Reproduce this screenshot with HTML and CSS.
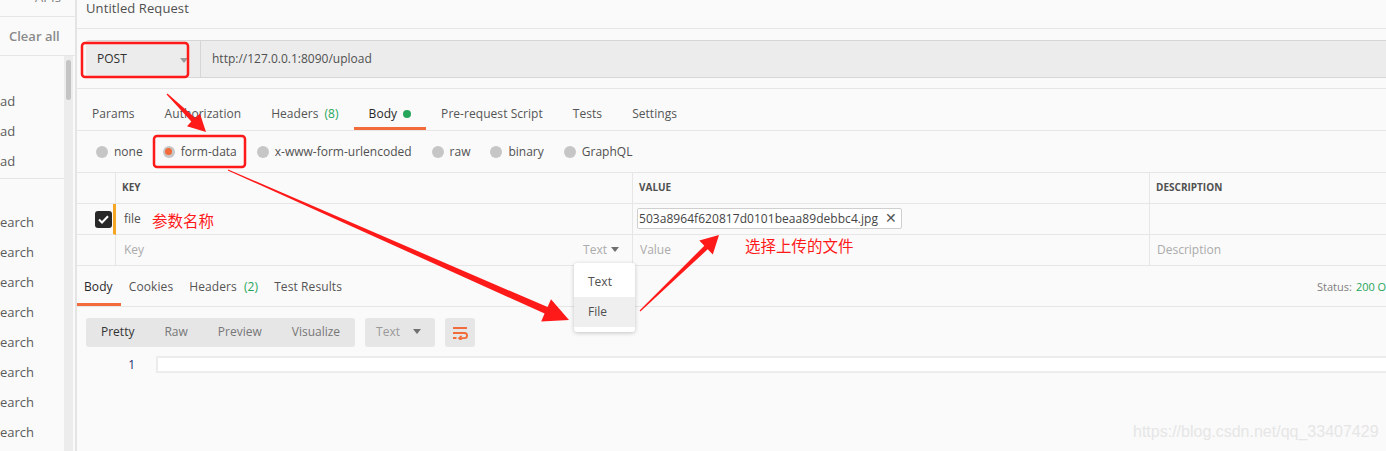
FILE: index.html
```html
<!DOCTYPE html>
<html>
<head>
<meta charset="utf-8">
<link rel="stylesheet" href="styles.css">
</head>
<body>
<div class="app">
  <aside class="sidebar">
    <div class="sb-apis"><span>APIs</span></div>
    <div class="sb-clear">Clear all</div>
    <div class="sb-body">
      <div class="sb-list">
        <div class="sb-group">
          <div class="sb-item">ad</div>
          <div class="sb-item">ad</div>
          <div class="sb-item">ad</div>
        </div>
        <div class="sb-group sb-group2">
          <div class="sb-item">earch</div>
          <div class="sb-item">earch</div>
          <div class="sb-item">earch</div>
          <div class="sb-item">earch</div>
          <div class="sb-item">earch</div>
          <div class="sb-item">earch</div>
          <div class="sb-item">earch</div>
          <div class="sb-item">earch</div>
        </div>
      </div>
      <div class="sb-track"><div class="sb-thumb"></div></div>
    </div>
  </aside>

  <main class="main">
    <div class="title">Untitled Request</div>
    <div class="urlrow">
      <div class="method">POST<span class="caret"></span></div>
      <div class="url">http://127.0.0.1:8090/upload</div>
    </div>
    <nav class="tabs">
      <div class="tab">Params</div>
      <div class="tab">Authorization</div>
      <div class="tab">Headers <span class="green">(8)</span></div>
      <div class="tab active">Body <span class="dot"></span></div>
      <div class="tab">Pre-request Script</div>
      <div class="tab">Tests</div>
      <div class="tab">Settings</div>
    </nav>
    <div class="radios">
      <label class="radio"><span class="circle"></span>none</label>
      <label class="radio"><span class="circle on"></span>form-data</label>
      <label class="radio"><span class="circle"></span>x-www-form-urlencoded</label>
      <label class="radio"><span class="circle"></span>raw</label>
      <label class="radio"><span class="circle"></span>binary</label>
      <label class="radio"><span class="circle"></span>GraphQL</label>
    </div>
    <div class="table">
      <div class="cell c0 head"></div>
      <div class="cell head">KEY</div>
      <div class="cell head">VALUE</div>
      <div class="cell head">DESCRIPTION</div>

      <div class="cell c0 marked"><span class="check"><svg width="11" height="9" viewBox="0 0 11 9"><path d="M1 4.5 L4 7.5 L10 1.2" fill="none" stroke="#fff" stroke-width="2"/></svg></span></div>
      <div class="cell key">file</div>
      <div class="cell"><span class="chip">503a8964f620817d0101beaa89debbc4.jpg<span class="x">✕</span></span></div>
      <div class="cell"></div>

      <div class="cell c0"></div>
      <div class="cell key ph"><span>Key</span><span class="type">Text <span class="caret dark"></span></span></div>
      <div class="cell ph">Value</div>
      <div class="cell ph">Description</div>
    </div>
    <div class="rtabs">
      <div class="rtab active">Body</div>
      <div class="rtab">Cookies</div>
      <div class="rtab">Headers <span class="green">(2)</span></div>
      <div class="rtab">Test Results</div>
      <div class="status">Status: <span class="green">200 OK</span>&nbsp;&nbsp; Time: 15ms</div>
    </div>
    <div class="toolbar">
      <div class="seg">
        <span class="seg-b on">Pretty</span>
        <span class="seg-b">Raw</span>
        <span class="seg-b">Preview</span>
        <span class="seg-b">Visualize</span>
      </div>
      <div class="fmt">Text<span class="caret dark"></span></div>
      <div class="wrap"><svg width="16" height="14" viewBox="0 0 16 14"><path d="M1 2 H15 M1 7 H12.5 a2.6 2.6 0 0 1 0 5.2 H7.5 M1 12 H4.5" fill="none" stroke="#f26b3a" stroke-width="1.8"/><path d="M9.6 9.8 L7 12.2 L9.6 14.4" fill="none" stroke="#f26b3a" stroke-width="1.6"/></svg></div>
    </div>
    <div class="editor">
      <span class="ln">1</span>
      <div class="line"></div>
    </div>
  </main>
</div>

<div class="menu">
  <div class="menu-item">Text</div>
  <div class="menu-item hover">File</div>
</div>

<div class="note note1">参数名称</div>
<div class="note note2">选择上传的文件</div>
<div class="watermark">https://blog.csdn.net/qq_33407429</div>

<svg class="anno" width="1386" height="451" viewBox="0 0 1386 451">
  <rect x="82" y="43" width="106" height="34" rx="3" fill="none" stroke="#ff1a1a" stroke-width="2.5"/>
  <rect x="154" y="136" width="91" height="31" rx="3" fill="none" stroke="#ff1a1a" stroke-width="2.5"/>
  <polygon fill="#ff1a1a" points="166.6,94.4 191.3,121.6 187,126.3 206,132 199.9,113.6 195.3,118 167.4,93.6"/>
  <polygon fill="#ff1a1a" points="227.8,170.5 544.6,313.5 541.2,321.4 569,320 551,299.2 547.6,307.1 228.2,169.5"/>
  <polygon fill="#ff1a1a" points="640.4,311.4 707.7,249.3 712.8,254.5 719,235 699.3,240.5 704.3,245.7 639.6,310.6"/>
</svg>
</body>
</html>
```
FILE: styles.css
```css
* { box-sizing: border-box; }
html, body { margin: 0; padding: 0; }
body {
  width: 1386px;
  height: 451px;
  overflow: hidden;
  background: #fafafa;
  font-family: "Open Sans", "Noto Sans", sans-serif;
  font-size: 12px;
  color: #505050;
  position: relative;
}
.app { display: flex; height: 451px; }

/* sidebar */
.sidebar {
  width: 77px;
  flex: none;
  border-right: 2px solid #e4e4e4;
  background: #fafafa;
  display: flex;
  flex-direction: column;
}
.sb-apis {
  height: 17px;
  overflow: hidden;
  border-bottom: 1px solid #e6e6e6;
  padding-left: 35px;
  font-size: 13px;
  color: #808080;
}
.sb-apis span { display: block; margin-top: -12px; }
.sb-clear {
  height: 39px;
  border-bottom: 1px solid #e6e6e6;
  padding-left: 9px;
  display: flex;
  align-items: center;
  font-size: 13px;
  font-weight: 600;
  color: #8a8a8a;
}
.sb-body { flex: 1; display: flex; }
.sb-list { flex: 1; }
.sb-group { padding-top: 30px; border-bottom: 1px solid #e4e4e4; padding-bottom: 2px; }
.sb-group2 { border-bottom: 0; padding-top: 28px; }
.sb-item { height: 30px; line-height: 30px; font-size: 13px; color: #5a5a5a; }
.sb-track { width: 9px; background: #ececec; margin-right: 2px; padding: 4px 2px 0; }
.sb-thumb { height: 40px; background: #c4c4c4; border-radius: 3px; }

/* main */
.main { flex: 1; min-width: 0; overflow: hidden; display: flex; flex-direction: column; }
.title {
  height: 29px;
  padding-left: 9px;
  padding-top: 0;
  line-height: 17px;
  font-size: 13px;
  color: #505050;
  border-bottom: 1px solid #e6e6e6;
  letter-spacing: 0.1px;
}
.urlrow {
  height: 60px;
  padding: 11px 0 10px 9px;
  display: flex;
  border-bottom: 1px solid #e6e6e6;
}
.method {
  width: 115px;
  background: #ececec;
  border-top: 1px solid #d6d6d6;
  border-bottom: 1px solid #d6d6d6;
  border-right: 1px solid #d6d6d6;
  border-radius: 3px 0 0 3px;
  display: flex;
  align-items: center;
  padding-left: 11px;
  padding-bottom: 2px;
  font-size: 12px;
  color: #303030;
  position: relative;
}
.method .caret { position: absolute; right: 12px; top: 17px; }
.caret {
  display: inline-block;
  width: 0; height: 0;
  border-left: 4px solid transparent;
  border-right: 4px solid transparent;
  border-top: 5px solid #9a9a9a;
}
.caret.dark { border-top-color: #707070; }
.url {
  flex: 1;
  background: #ececec;
  border-top: 1px solid #d6d6d6;
  border-bottom: 1px solid #d6d6d6;
  display: flex;
  align-items: center;
  padding-left: 11px;
  padding-bottom: 2px;
  color: #505050;
}

.tabs {
  height: 42px;
  display: flex;
  border-bottom: 1px solid #e6e6e6;
}
.tab {
  padding: 10px 15px 0;
  display: flex;
  align-items: center;
  gap: 6px;
  font-size: 12px;
  color: #555;
  border-bottom: 3px solid transparent;
  letter-spacing: 0.05px;
}
.tab.active { border-bottom-color: #f26b3a; color: #282828; }
.green { color: #26a65b; }
.dot { width: 8px; height: 8px; border-radius: 50%; background: #26a65b; display: inline-block; margin-top: 1px; }

.radios {
  height: 42px;
  display: flex;
  align-items: center;
  gap: 20px;
  padding-left: 19px;
  border-bottom: 1px solid #e6e6e6;
}
.radio { display: flex; align-items: center; gap: 6px; font-size: 12px; color: #505050; }
.circle {
  width: 12px; height: 12px; border-radius: 50%;
  background: #c6c6c6;
  display: inline-flex; align-items: center; justify-content: center;
}
.circle.on::after {
  content: ""; width: 7px; height: 7px; border-radius: 50%; background: #f26b3a;
}

.table {
  display: grid;
  grid-template-columns: 39px 517px 517px 517px;
  grid-template-rows: 31px 31px 30px;
  border-bottom: 1px solid #e6e6e6;
}
.cell {
  border-right: 1px solid #e6e6e6;
  border-bottom: 1px solid #e6e6e6;
  display: flex;
  align-items: center;
  padding-left: 7px;
  padding-bottom: 2px;
  font-size: 12px;
  color: #505050;
  background: #fafafa;
}
.table .cell:nth-last-child(-n+4) { border-bottom: 0; }
.head { font-size: 10px; font-weight: 700; color: #505050; padding-left: 6px; }
.c0 { padding: 0; justify-content: flex-end; }
.marked { border-right: 3px solid #f5a623; }
.check {
  width: 17px; height: 17px; border-radius: 3px; background: #282828;
  display: flex; align-items: center; justify-content: center;
  margin-right: 1px; margin-top: 1px;
}
.key { padding-left: 8px; }
.ph { color: #ababab; }
.key.ph { justify-content: space-between; padding-right: 13px; }
.type { display: inline-flex; align-items: center; gap: 4px; }
.chip {
  margin-left: -3px;
  height: 21px;
  border: 1px solid #cfcfcf;
  border-radius: 2px;
  background: #fff;
  display: inline-flex;
  align-items: center;
  padding: 0 4px 0 1px;
  color: #444;
  gap: 7px;
  letter-spacing: 0.05px;
}
.chip .x { font-size: 14px; color: #555; line-height: 14px; }

.rtabs {
  height: 41px;
  display: flex;
  border-bottom: 1px solid #e6e6e6;
}
.rtab {
  padding: 4px 8px 0 8px;
  display: flex;
  align-items: center;
  gap: 7px;
  border-bottom: 3px solid transparent;
  color: #555;
  letter-spacing: 0.1px;
}
.rtab.active { border-bottom-color: #f26b3a; color: #282828; padding-left: 7px; }
.status {
  margin-left: auto;
  width: 69px;
  flex: none;
  white-space: nowrap;
  display: flex;
  align-items: center;
  gap: 4px;
  font-size: 11px;
  color: #808080;
  padding-top: 1px;
}

.toolbar {
  margin-top: 11px;
  height: 29px;
  display: flex;
  gap: 10px;
  padding-left: 9px;
}
.seg { display: flex; background: #e6e6e6; border-radius: 3px; }
.seg-b { padding: 0 15px 2px; display: flex; align-items: center; color: #777; }
.seg-b.on { color: #333; }
.fmt {
  width: 70px;
  background: #e6e6e6;
  border-radius: 3px;
  display: flex;
  align-items: center;
  justify-content: space-between;
  padding: 0 14px 2px 11px;
  color: #999;
}
.wrap {
  width: 30px;
  background: #e6e6e6;
  border-radius: 3px;
  display: flex;
  align-items: center;
  justify-content: center;
}

.editor {
  margin-top: 9px;
  display: flex;
  align-items: center;
  height: 17px;
}
.ln { width: 79px; text-align: right; padding-right: 21px; color: #1e2f6e; font-size: 12px; }
.line { flex: 1; height: 17px; border: 2px solid #ececec; border-right: 0; background: #fff; }

/* overlays */
.menu {
  position: absolute;
  left: 574px;
  top: 263px;
  width: 61px;
  padding: 4px 0 5px;
  background: #fff;
  border-radius: 3px;
  box-shadow: 0 1px 4px rgba(0,0,0,0.22);
}
.menu-item { height: 30px; padding-left: 14px; padding-bottom: 1px; display: flex; align-items: center; color: #505050; }
.menu-item.hover { background: #efefef; }

.note {
  position: absolute;
  color: #ff1a1a;
  font-family: "Noto Sans CJK SC", "Noto Sans", sans-serif;
  font-size: 15.5px;
  line-height: 18px;
}
.note1 { left: 152px; top: 211px; }
.note2 { left: 745px; top: 236px; }

.watermark {
  position: absolute;
  left: 1133px;
  top: 423px;
  font-family: "Liberation Sans", Arial, sans-serif;
  font-size: 16px;
  color: #e6e6e6;
}
.anno { position: absolute; left: 0; top: 0; pointer-events: none; }
```
